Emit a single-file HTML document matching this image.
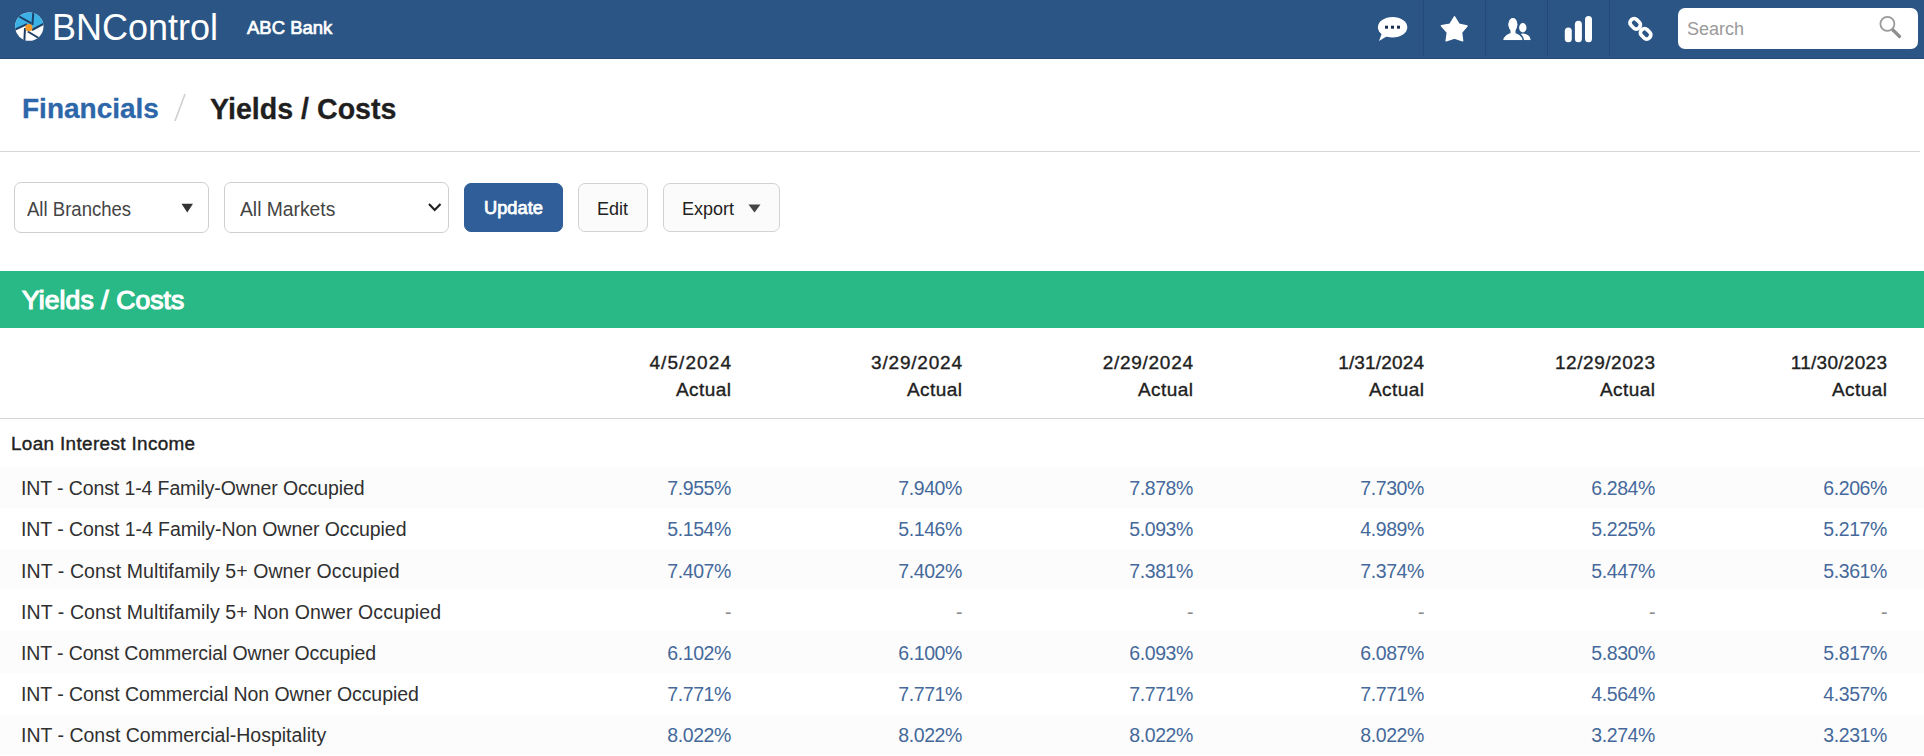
<!DOCTYPE html>
<html><head><meta charset="utf-8">
<style>
*{box-sizing:border-box;margin:0;padding:0}
html,body{width:1924px;height:756px;overflow:hidden;background:#fff}
body{font-family:"Liberation Sans",sans-serif;color:#212529;position:relative}
.abs{position:absolute;white-space:nowrap}
#hdr{position:absolute;left:0;top:0;width:1924px;height:59px;background:#2a5585;border-bottom:1px solid #244a74}
.cell{position:absolute;top:0;width:1px;height:56px;background:#244a78}
#search{position:absolute;left:1678px;top:8px;width:240px;height:41px;background:#fff;border-radius:7px}
.sel{position:absolute;top:182px;height:51px;border:1px solid #cfcfcf;border-radius:7px;background:#fff}
.btn{position:absolute;top:183px;height:49px;border:1px solid #d2d2d2;border-radius:7px;background:#fbfbfb}
#green{position:absolute;left:0;top:271px;width:1924px;height:57px;background:#29b986}
.stripe{position:absolute;left:0;width:1924px;height:41.2px;background:#fcfcfc}
.num{position:absolute;white-space:nowrap;text-align:right;color:#45699b;font-size:19.5px;line-height:22px;letter-spacing:-0.4px}
.lbl{position:absolute;white-space:nowrap;font-size:19.5px;line-height:22px;color:#303030}
.hd{position:absolute;white-space:nowrap;text-align:right;font-size:19px;line-height:27px;color:#212121;-webkit-text-stroke:0.35px #212121;top:349px}
.hd .ac{letter-spacing:0.46px;margin-right:-0.46px}
.dash{color:#8a8a8a}
</style></head><body>
<div id="hdr"></div>
<!-- logo -->
<svg class="abs" style="left:14px;top:11px" width="31" height="31" viewBox="0 0 31 31">
  <defs><clipPath id="cc"><circle cx="15.3" cy="15.6" r="14.2"/></clipPath></defs>
  <g clip-path="url(#cc)">
    <rect x="0" y="0" width="31" height="31" fill="#fdfdfd"/>
    <path d="M0 0 L31 0 L31 12.1 L18.2 18.9 L12.7 13.3 L0 19 Z" fill="#3cb1e6"/>
    <g stroke="#1d3e66" stroke-width="2" fill="none">
      <line x1="19.4" y1="0" x2="18.4" y2="14"/>
      <line x1="2.5" y1="4" x2="17.5" y2="12.4"/>
      <line x1="0" y1="19" x2="13" y2="13.2"/>
      <line x1="10.3" y1="31" x2="11" y2="17"/>
      <line x1="28" y1="29" x2="13.8" y2="20.5"/>
      <line x1="31" y1="12.1" x2="18" y2="19"/>
    </g>
  </g>
  <circle cx="14.9" cy="16.7" r="3.6" fill="#f39a2b"/>
</svg>
<div class="abs" id="brand" style="left:52px;top:8px;font-size:36px;line-height:40px;color:#fff">BNControl</div>
<div class="abs" id="bank" style="left:247px;top:17px;font-size:18.5px;line-height:22px;color:#fff;-webkit-text-stroke:0.7px #fff">ABC Bank</div>

<div class="cell" style="left:1423px"></div>
<div class="cell" style="left:1485px"></div>
<div class="cell" style="left:1547px"></div>
<div class="cell" style="left:1609px"></div>

<!-- chat icon -->
<svg class="abs" style="left:1376px;top:15px" width="34" height="28" viewBox="0 0 34 28">
  <ellipse cx="16.6" cy="12.2" rx="14.7" ry="10.3" fill="#fff"/>
  <path d="M6 18 L3 26 L13 20 Z" fill="#fff"/>
  <rect x="9" y="10.7" width="3" height="3" fill="#1c2f52"/>
  <rect x="15" y="10.7" width="3" height="3" fill="#1c2f52"/>
  <rect x="21" y="10.7" width="3" height="3" fill="#1c2f52"/>
</svg>
<!-- star -->
<svg class="abs" style="left:1438px;top:14px" width="32" height="30" viewBox="0 0 32 30">
  <path d="M16.5 2.8 L21 10.2 L29 12 L23.5 18.4 L24.6 26.8 L16.5 24 L8.2 26.8 L9.4 18.4 L3.4 11.8 L12 10.2 Z" fill="#fff" stroke="#fff" stroke-width="1.5" stroke-linejoin="round"/>
</svg>
<!-- people -->
<svg class="abs" style="left:1500px;top:15px" width="34" height="28" viewBox="0 0 34 28">
  <ellipse cx="22.8" cy="12.8" rx="3.7" ry="4.7" fill="#fff"/>
  <path d="M19 25.2 C19.5 20.5 21 18.6 23 18.6 C27.5 18.8 30.3 21 30.6 25.2 Z" fill="#fff"/>
  <g stroke="#2a5585" stroke-width="1.4">
  <ellipse cx="12.9" cy="9.6" rx="5.1" ry="7.3" fill="#fff"/>
  <path d="M2.3 25.9 C2.8 20.5 7.5 17.4 12.9 17.4 C18.3 17.4 23 20.5 23.5 25.9 Z" fill="#fff"/>
  </g>
  <ellipse cx="12.9" cy="9.6" rx="4.4" ry="6.6" fill="#fff"/>
  <rect x="10.5" y="14" width="5" height="5" fill="#fff"/>
  <rect x="0" y="25.2" width="34" height="3" fill="#2a5585"/>
</svg>
<!-- bars -->
<svg class="abs" style="left:1562px;top:14px" width="32" height="30" viewBox="0 0 32 30">
  <rect x="2.8" y="13.5" width="7" height="14.8" rx="3.5" fill="#fff"/>
  <rect x="12.9" y="6.8" width="7" height="21.5" rx="3.5" fill="#fff"/>
  <rect x="23" y="2.1" width="7" height="26.2" rx="3.5" fill="#fff"/>
</svg>
<!-- link -->
<svg class="abs" style="left:1624px;top:14px" width="32" height="30" viewBox="0 0 32 30">
  <rect x="-5.5" y="-4" width="11" height="8" rx="3.6" transform="translate(11.2,9.8) rotate(45)" fill="none" stroke="#fff" stroke-width="3.7"/>
  <rect x="-5.5" y="-4" width="11" height="8" rx="3.6" transform="translate(21.6,19.8) rotate(45)" fill="none" stroke="#fff" stroke-width="3.7"/>
</svg>

<div id="search"></div>
<div class="abs" style="left:1687px;top:18px;font-size:18px;line-height:22px;color:#9a9a9a">Search</div>
<svg class="abs" style="left:1876px;top:12px" width="28" height="28" viewBox="0 0 28 28">
  <circle cx="11.4" cy="11.9" r="7" fill="none" stroke="#9a9a9a" stroke-width="1.8"/>
  <line x1="17" y1="18" x2="23.5" y2="24.5" stroke="#8f8f8f" stroke-width="3.2" stroke-linecap="round"/>
</svg>

<!-- breadcrumb -->
<div class="abs" style="left:22px;top:92px;font-size:28px;line-height:34px;font-weight:700;color:#2e66aa;-webkit-text-stroke:0.3px #2e66aa">Financials</div>
<svg class="abs" style="left:172px;top:92px" width="16" height="31" viewBox="0 0 16 31"><line x1="13" y1="2" x2="3" y2="29" stroke="#d0d0d0" stroke-width="1.6"/></svg>
<div class="abs" style="left:210px;top:92px;font-size:28.6px;line-height:34px;font-weight:700;color:#1f1f1f;-webkit-text-stroke:0.3px #1f1f1f">Yields / Costs</div>
<div class="abs" style="left:0;top:151px;width:1920px;height:1px;background:#d6d6d6"></div>

<!-- controls -->
<div class="sel" style="left:14px;width:195px"></div>
<div class="abs" style="left:27px;top:197px;font-size:20.5px;line-height:24px;color:#444;transform:scaleX(0.905);transform-origin:0 0">All Branches</div>
<svg class="abs" style="left:180px;top:202px" width="15" height="12" viewBox="0 0 15 12"><path d="M1.5 1.7 L13 1.7 L7.25 10.5 Z" fill="#333"/></svg>

<div class="sel" style="left:224px;width:225px"></div>
<div class="abs" style="left:240px;top:197px;font-size:20.5px;line-height:24px;color:#444;transform:scaleX(0.94);transform-origin:0 0">All Markets</div>
<svg class="abs" style="left:426px;top:200px" width="18" height="14" viewBox="0 0 18 14"><path d="M3 4 L8.7 10 L14.5 4" fill="none" stroke="#222" stroke-width="2.2"/></svg>

<div class="btn" style="left:464px;width:99px;background:#2f5e98;border-color:#2f5e98"></div>
<div class="abs" style="left:484px;top:197px;font-size:18.3px;line-height:22px;color:#fff;-webkit-text-stroke:0.75px #fff">Update</div>
<div class="btn" style="left:578px;width:70px"></div>
<div class="abs" style="left:597px;top:198px;font-size:18px;line-height:22px;color:#222">Edit</div>
<div class="btn" style="left:663px;width:117px"></div>
<div class="abs" style="left:682px;top:198px;font-size:18px;line-height:22px;color:#222">Export</div>
<svg class="abs" style="left:747px;top:203px" width="15" height="11" viewBox="0 0 15 11"><path d="M1.5 1.5 L13.5 1.5 L7.5 9.4 Z" fill="#444"/></svg>

<!-- green -->
<div id="green"></div>
<div class="abs" style="left:22px;top:285px;font-size:26.5px;line-height:30px;color:#fff;-webkit-text-stroke:1.2px #fff;letter-spacing:0.1px">Yields / Costs</div>

<!-- table header -->
<div class="hd" style="right:1193px"><span class="dt" style="letter-spacing:1.09px;margin-right:-1.09px">4/5/2024</span><br><span class="ac">Actual</span></div>
<div class="hd" style="right:962px"><span class="dt" style="letter-spacing:0.8px;margin-right:-0.8px">3/29/2024</span><br><span class="ac">Actual</span></div>
<div class="hd" style="right:731px"><span class="dt" style="letter-spacing:0.72px;margin-right:-0.72px">2/29/2024</span><br><span class="ac">Actual</span></div>
<div class="hd" style="right:500px"><span class="dt" style="letter-spacing:0.16px;margin-right:-0.16px">1/31/2024</span><br><span class="ac">Actual</span></div>
<div class="hd" style="right:269px"><span class="dt" style="letter-spacing:0.55px;margin-right:-0.55px">12/29/2023</span><br><span class="ac">Actual</span></div>
<div class="hd" style="right:37px"><span class="dt" style="letter-spacing:0.29px;margin-right:-0.29px">11/30/2023</span><br><span class="ac">Actual</span></div>
<div class="abs" style="left:0;top:418px;width:1924px;height:1px;background:#d6d6d6"></div>

<div class="lbl" style="left:11px;top:433px;color:#222;font-size:18.9px;-webkit-text-stroke:0.4px #222;letter-spacing:0.35px">Loan Interest Income</div>

<div class="stripe" style="top:466.6px"></div>
<div class="stripe" style="top:549.0px"></div>
<div class="stripe" style="top:631.4px"></div>
<div class="stripe" style="top:713.8px"></div>

<!--ROWS-->
<div class="lbl" style="left:21px;top:477.2px;letter-spacing:-0.11px">INT - Const 1-4 Family-Owner Occupied</div>
<div class="num" style="right:1193px;top:477.2px">7.955%</div>
<div class="num" style="right:962px;top:477.2px">7.940%</div>
<div class="num" style="right:731px;top:477.2px">7.878%</div>
<div class="num" style="right:500px;top:477.2px">7.730%</div>
<div class="num" style="right:269px;top:477.2px">6.284%</div>
<div class="num" style="right:37px;top:477.2px">6.206%</div>
<div class="lbl" style="left:21px;top:518.35px;letter-spacing:-0.08px">INT - Const 1-4 Family-Non Owner Occupied</div>
<div class="num" style="right:1193px;top:518.35px">5.154%</div>
<div class="num" style="right:962px;top:518.35px">5.146%</div>
<div class="num" style="right:731px;top:518.35px">5.093%</div>
<div class="num" style="right:500px;top:518.35px">4.989%</div>
<div class="num" style="right:269px;top:518.35px">5.225%</div>
<div class="num" style="right:37px;top:518.35px">5.217%</div>
<div class="lbl" style="left:21px;top:559.5px;letter-spacing:0.085px">INT - Const Multifamily 5+ Owner Occupied</div>
<div class="num" style="right:1193px;top:559.5px">7.407%</div>
<div class="num" style="right:962px;top:559.5px">7.402%</div>
<div class="num" style="right:731px;top:559.5px">7.381%</div>
<div class="num" style="right:500px;top:559.5px">7.374%</div>
<div class="num" style="right:269px;top:559.5px">5.447%</div>
<div class="num" style="right:37px;top:559.5px">5.361%</div>
<div class="lbl" style="left:21px;top:600.65px;letter-spacing:0.084px">INT - Const Multifamily 5+ Non Onwer Occupied</div>
<div class="num dash" style="right:1193px;top:600.65px">-</div>
<div class="num dash" style="right:962px;top:600.65px">-</div>
<div class="num dash" style="right:731px;top:600.65px">-</div>
<div class="num dash" style="right:500px;top:600.65px">-</div>
<div class="num dash" style="right:269px;top:600.65px">-</div>
<div class="num dash" style="right:37px;top:600.65px">-</div>
<div class="lbl" style="left:21px;top:641.8px;letter-spacing:-0.12px">INT - Const Commercial Owner Occupied</div>
<div class="num" style="right:1193px;top:641.8px">6.102%</div>
<div class="num" style="right:962px;top:641.8px">6.100%</div>
<div class="num" style="right:731px;top:641.8px">6.093%</div>
<div class="num" style="right:500px;top:641.8px">6.087%</div>
<div class="num" style="right:269px;top:641.8px">5.830%</div>
<div class="num" style="right:37px;top:641.8px">5.817%</div>
<div class="lbl" style="left:21px;top:682.95px;letter-spacing:-0.07px">INT - Const Commercial Non Owner Occupied</div>
<div class="num" style="right:1193px;top:682.95px">7.771%</div>
<div class="num" style="right:962px;top:682.95px">7.771%</div>
<div class="num" style="right:731px;top:682.95px">7.771%</div>
<div class="num" style="right:500px;top:682.95px">7.771%</div>
<div class="num" style="right:269px;top:682.95px">4.564%</div>
<div class="num" style="right:37px;top:682.95px">4.357%</div>
<div class="lbl" style="left:21px;top:724.1px;letter-spacing:0px">INT - Const Commercial-Hospitality</div>
<div class="num" style="right:1193px;top:724.1px">8.022%</div>
<div class="num" style="right:962px;top:724.1px">8.022%</div>
<div class="num" style="right:731px;top:724.1px">8.022%</div>
<div class="num" style="right:500px;top:724.1px">8.022%</div>
<div class="num" style="right:269px;top:724.1px">3.274%</div>
<div class="num" style="right:37px;top:724.1px">3.231%</div>
<!--/ROWS-->
</body></html>
